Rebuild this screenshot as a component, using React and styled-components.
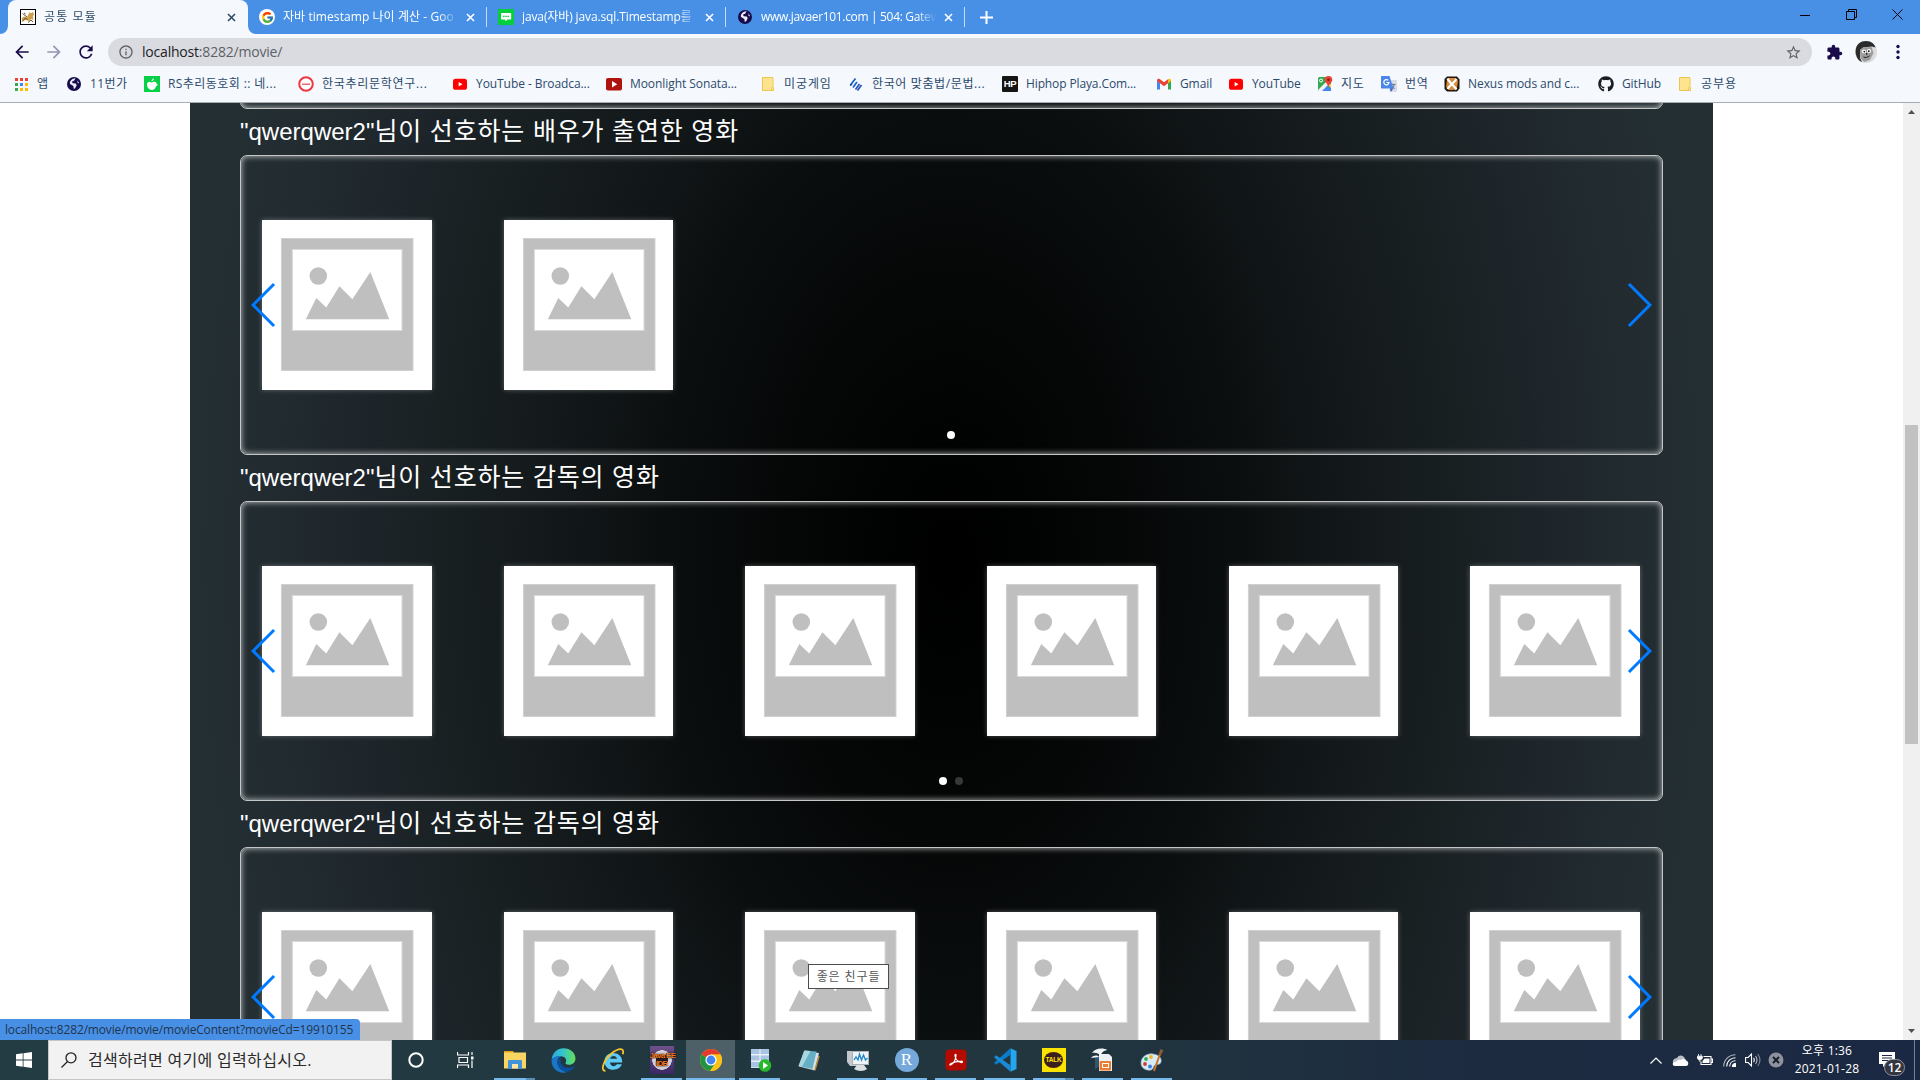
import React from "react";
import styled, { createGlobalStyle } from "styled-components";
import { FaGithub } from "react-icons/fa";
import { FcGoogle } from "react-icons/fc";
import {
  MdArrowBack,
  MdArrowForward,
  MdRefresh,
  MdInfoOutline,
  MdStarBorder,
  MdExtension,
} from "react-icons/md";

const ui = `"Open Sans", "Noto Sans CJK KR", sans-serif`;

const GlobalStyle = createGlobalStyle`
  * { box-sizing: border-box; }
  html, body { margin: 0; padding: 0; overflow: hidden; background: #fff; }
  svg { display: block; flex: none; }
`;

const Screen = styled.div`
  position: relative;
  width: 1920px;
  height: 1080px;
  display: flex;
  flex-direction: column;
  overflow: hidden;
  font-family: ${ui};
`;

/* ---------- browser frame ---------- */

const TabStrip = styled.div`
  height: 34px;
  flex: none;
  display: flex;
  align-items: stretch;
  background: #4790e6;
  padding-left: 8px;
`;

const Tab = styled.div`
  position: relative;
  width: ${(p) => (p.$active ? 240 : 239)}px;
  display: flex;
  align-items: center;
  padding: 0 12px 0 ${(p) => (p.$active ? 12 : 11)}px;
  color: ${(p) => (p.$active ? "#2f4a66" : "#fff")};
  background: ${(p) => (p.$active ? "#f5f8fd" : "transparent")};
  border-radius: 8px 8px 0 0;

  &::after {
    content: "";
    display: ${(p) => (p.$active ? "none" : "block")};
    position: absolute;
    right: 0;
    top: 7px;
    width: 1px;
    height: 20px;
    background: #c5dcf7;
  }
`;

const TabFoot = styled.svg`
  position: absolute;
  bottom: 0;
  ${(p) => (p.$left ? "left: -8px;" : "right: -8px; transform: scaleX(-1);")}
`;

const TabTitle = styled.span`
  width: 178px;
  margin-left: 8px;
  font-size: 12px;
  line-height: 18px;
  letter-spacing: ${(p) => p.$ls || 0}px;
  white-space: nowrap;
  -webkit-mask-image: linear-gradient(90deg, #000 156px, transparent 175px);
  mask-image: linear-gradient(90deg, #000 156px, transparent 175px);
`;

const TabClose = styled.span`
  margin-left: auto;
  display: flex;
`;

const GoogleDisc = styled.span`
  width: 16px;
  height: 16px;
  border-radius: 50%;
  background: #fff;
  display: flex;
  align-items: center;
  justify-content: center;
`;

const NewTab = styled.div`
  display: flex;
  align-items: center;
  padding-left: 15px;
`;

const WindowButtons = styled.div`
  margin-left: auto;
  display: flex;
  height: 29px;
`;

const WindowButton = styled.div`
  width: 46px;
  display: flex;
  align-items: center;
  justify-content: center;
`;

const Toolbar = styled.div`
  height: 36px;
  flex: none;
  display: flex;
  align-items: center;
  background: #f5f8fd;
  color: #1a0c4b;
  padding-left: 6px;
`;

const NavButton = styled.div`
  width: 32px;
  display: flex;
  justify-content: center;
  font-size: 20px;
  opacity: ${(p) => (p.$off ? 0.42 : 1)};
`;

const Omnibox = styled.div`
  width: 1704px;
  height: 28px;
  margin-left: 6px;
  border-radius: 14px;
  background: #dadbe0;
  display: flex;
  align-items: center;
  padding: 0 10px;
  color: #5f6368;
  font-size: 16px;
`;

const Address = styled.span`
  flex: 1;
  margin-left: 8px;
  font-size: 14px;
  line-height: 20px;
  letter-spacing: -0.2px;
  color: #5c6167;

  b { font-weight: 400; color: #202124; }
`;

const ToolAction = styled.div`
  width: ${(p) => p.$w}px;
  display: flex;
  justify-content: center;
  font-size: 19px;
`;

const BookmarkBar = styled.div`
  height: 33px;
  flex: none;
  display: flex;
  align-items: center;
  background: #f5f8fd;
  border-bottom: 1px solid #a9adb3;
  padding: 0 0 5px 13px;
`;

const Bookmark = styled.div`
  width: ${(p) => p.$w}px;
  flex: none;
  display: flex;
  align-items: center;
  gap: 8px;
  font-size: 12px;
  line-height: 18px;
  letter-spacing: ${(p) => p.$ls || 0}px;
  color: #2c4a6b;
  white-space: nowrap;
`;

const IconSlot = styled.span`
  width: 16px;
  height: 16px;
  flex: none;
  display: flex;
  align-items: center;
  justify-content: center;
`;

/* ---------- page ---------- */

const Viewport = styled.div`
  height: 937px;
  flex: none;
  display: flex;
  overflow: hidden;
`;

const PageBody = styled.main`
  flex: 1;
  display: flex;
  justify-content: center;
  overflow: hidden;
`;

const Container = styled.div`
  width: 1523px;
  height: 937px;
  overflow: hidden;
  padding: 0 50px;
  background: radial-gradient(
    ellipse 760px 1230px at 50% 455px,
    #000 0%,
    #010202 10%,
    #050707 22%,
    #0a0d0e 36%,
    #141a1c 55%,
    #192022 67%,
    #1c2327 74%,
    #1e252b 79%,
    #20292e 86%,
    #242f34 100%
  );
`;

const ScrolledContent = styled.div`
  margin-top: -294px;
`;

const SectionTitle = styled.h2`
  margin: 0;
  height: 46px;
  padding-top: 5px;
  color: #fff;
  font: 400 24px/34px "Liberation Sans", "Noto Sans CJK KR", sans-serif;
  white-space: nowrap;
`;

const Korean = styled.span`
  font-size: 25px;
  letter-spacing: 0.82px;
`;

const Carousel = styled.section`
  position: relative;
  height: 300px;
  display: flex;
  align-items: center;
  gap: 30px;
  border: 1px solid #c4c6c7;
  border-radius: 7px;
  box-shadow: inset 0 0 6px rgba(255, 255, 255, 0.75);
`;

const Slide = styled.div`
  width: 211.66px;
  flex: none;
  display: flex;
  justify-content: center;
`;

const Poster = styled.svg`
  width: 169.4px;
  height: 170px;
  background: #fff;
  box-shadow: 0 0 5px rgba(255, 255, 255, 0.3);
`;

const Arrow = styled.svg`
  position: absolute;
  top: 127px;
  ${(p) => (p.$next ? "right: 10px;" : "left: 10px;")}
`;

const Dots = styled.div`
  position: absolute;
  left: 0;
  right: 1px;
  bottom: 15px;
  display: flex;
  justify-content: center;
  gap: 8px;
`;

const Dot = styled.span`
  width: 8px;
  height: 8px;
  border-radius: 50%;
  background: ${(p) => (p.$on ? "#fff" : "#373839")};
`;

const Scrollbar = styled.div`
  width: 17px;
  display: flex;
  flex-direction: column;
  align-items: center;
  justify-content: space-between;
  background: #f0f0f0;
  padding: 7px 0;
`;

const ScrollTrack = styled.div`
  flex: 1;
  width: 13px;
  padding-top: 311px;
`;

const ScrollThumb = styled.div`
  height: 319px;
  background: #c1c1c1;
`;

const LinkStatus = styled.div`
  position: absolute;
  left: 0;
  top: 1019px;
  width: 360px;
  height: 21px;
  padding-left: 5px;
  border-radius: 0 4px 0 0;
  background: #4790e6;
  color: #22344c;
  font-size: 12px;
  line-height: 21px;
  letter-spacing: -0.16px;
  white-space: nowrap;
`;

const HoverTip = styled.div`
  position: absolute;
  left: 808px;
  top: 964px;
  width: 81px;
  height: 25px;
  border: 1px solid #4c4c4c;
  background: #fff;
  color: #575757;
  font-size: 12px;
  line-height: 24px;
  letter-spacing: 0.9px;
  text-align: center;
  white-space: nowrap;
`;

/* ---------- taskbar ---------- */

const Taskbar = styled.footer`
  height: 40px;
  flex: none;
  display: flex;
  background: linear-gradient(90deg, #233b43 0%, #21363f 55%, #1d2c40 75%, #1b2843 100%);
  color: #fff;
`;

const StartButton = styled.div`
  width: 48px;
  display: flex;
  align-items: center;
  justify-content: center;
`;

const SearchBox = styled.div`
  width: 344px;
  display: flex;
  align-items: center;
  gap: 11px;
  padding-left: 12px;
  background: #f2f2f2;
  border: 1px solid #c6c6c6;
  color: #2b2b2b;
  font-size: 16px;
  line-height: 22px;
  letter-spacing: 0.3px;
`;

const TaskButton = styled.div`
  position: relative;
  width: ${(p) => p.$w || 49}px;
  display: flex;
  align-items: center;
  justify-content: center;
  background: ${(p) => (p.$active ? "#4d6068" : "transparent")};

  &::after {
    content: "";
    display: ${(p) => (p.$running ? "block" : "none")};
    position: absolute;
    bottom: 0;
    left: ${(p) => (p.$active ? 0 : 4)}px;
    right: ${(p) => (p.$active ? 0 : 4)}px;
    height: 2px;
    background: ${(p) =>
      p.$many ? "linear-gradient(90deg, #76b9ed 32px, #5a8cb4 32px)" : "#76b9ed"};
  }
`;

const Tray = styled.div`
  margin-left: auto;
  display: flex;
  align-items: center;
`;

const TrayIcon = styled.div`
  width: ${(p) => p.$w || 24}px;
  display: flex;
  justify-content: center;
`;

const Clock = styled.div`
  width: 78px;
  font-size: 12px;
  line-height: 18px;
  text-align: center;
  padding-bottom: 1px;
  letter-spacing: 0.2px;
`;

const Notice = styled.div`
  position: relative;
  width: 48px;
  height: 40px;
  padding: 12px 0 0 12px;
  border-right: 1px solid #77808f;
  margin: 0 5px 0 1px;
`;

const NoticeBadge = styled.span`
  position: absolute;
  left: 17px;
  top: 19px;
  width: 21px;
  height: 17px;
  border-radius: 9px;
  border: 1px solid #8b8f98;
  background: #33363f;
  font-size: 12px;
  line-height: 15px;
  font-weight: 600;
  text-align: center;
`;

/* ---------- small drawings ---------- */

const CloseGlyph = ({ color }) => (
  <svg width="9" height="9" viewBox="0 0 9 9">
    <path d="M1 1l7 7M8 1l-7 7" stroke={color} strokeWidth="1.6" />
  </svg>
);

const Tomcat = () => (
  <svg width="16" height="16" viewBox="0 0 16 16">
    <rect x=".5" y=".5" width="15" height="15" fill="#fff" stroke="#000" />
    <path d="M2 9l2-1.500 3 1L9.500 3l1.300 1.200L13 3l1 2.500-1.200 2 .7 3.500-2.500-1-2 2-3-1L2 12z" fill="#cf9f4a" />
    <path d="M2.500 4.500L7 8M2.500 12.500l3-3.500 2 1.500M8 13.500l3-2.500 2 2M4 4l1.500 1" stroke="#6a5233" fill="none" />
  </svg>
);

const Globe = () => (
  <svg width="16" height="16" viewBox="0 0 16 16">
    <circle cx="8" cy="8" r="7" fill="#170b4c" />
    <path d="M6.500 3l3-1-1.200 2.600-2.400 1.200.9 1.500 3 .2.900 1.700-1.700 3.300-1.300.3-.3-2.700-3.400-2C3.300 6 4.700 4 6.500 3zM11.500 4.200l1.700 3.200-1.700-.6z" fill="#e9eefa" />
  </svg>
);

const Blog = () => (
  <svg width="16" height="16" viewBox="0 0 16 16">
    <rect width="16" height="16" fill="#03cf3d" />
    <path d="M4 4h8.200c.8 0 1 .4 1 1v4.500c0 .7-.3 1-1 1H9.300L8 12.300l-1.300-1.800H4c-.7 0-1-.3-1-1V5c0-.6.3-1 1-1z" fill="#fff" />
    <path d="M5 7.300h6" stroke="#03cf3d" strokeWidth="1.300" strokeDasharray="1.500 .7" />
  </svg>
);

const Apps = () => (
  <svg width="16" height="16" viewBox="0 0 16 16">
    {["#ea4335", "#ea4335", "#ea4335", "#34a853", "#4285f4", "#fbbc04", "#34a853", "#fbbc04", "#fbbc04"].map((c, i) => (
      <rect key={i} x={2 + (i % 3) * 5} y={2 + Math.floor(i / 3) * 5} width="3" height="3" fill={c} />
    ))}
  </svg>
);

const GreenApple = () => (
  <svg width="16" height="16" viewBox="0 0 16 16">
    <rect width="16" height="16" fill="#07cf46" />
    <path d="M3 7.500C4 5.700 6 5.600 7.700 6.400 9.500 5.500 12 5.700 12.500 7.400c1.600.3 1.500 2.400-.5 2.800C11.300 12.700 10 14 7.800 14 4.800 14 2.600 10.500 3 7.500zM7.500 5.200c0-1.500.8-2.500 2.500-3-.1 1.700-1 2.700-2.500 3z" fill="#fff" />
  </svg>
);

const CafeRing = () => (
  <svg width="16" height="16" viewBox="0 0 16 16">
    <circle cx="8" cy="8" r="6.800" fill="#fff" stroke="#ee3541" strokeWidth="2" />
    <path d="M4.300 8.300h7.500" stroke="#ee3541" strokeWidth="1.600" strokeDasharray="1.500 .5" />
  </svg>
);

const YouTube = () => (
  <svg width="16" height="16" viewBox="0 0 16 16">
    <rect x="1" y="2.800" width="14" height="11" rx="2.600" fill="#f00" />
    <path d="M6.600 6v4.600l4-2.300z" fill="#fff" />
  </svg>
);

const RedPlay = () => (
  <svg width="16" height="16" viewBox="0 0 16 16">
    <rect y="2" width="16" height="12.500" rx="2" fill="#b0120d" />
    <path d="M6 5v6.400l5.200-3.200z" fill="#fff" />
  </svg>
);

const Folder = () => (
  <svg width="16" height="16" viewBox="0 0 16 16">
    <path d="M2.500 1.500h10.500v9l.6 1v3H2.500z" fill="#ffe48f" stroke="#eec64f" />
    <path d="M11.500 14v-3" stroke="#eec64f" />
  </svg>
);

const Swoosh = () => (
  <svg width="16" height="16" viewBox="0 0 16 16">
    <path d="M2.500 9L7.500 2.500M5 11.500L9 6" stroke="#1560c4" strokeWidth="1.700" fill="none" />
    <path d="M2 9.500l2-1.500" stroke="#12408f" strokeWidth="1.500" />
    <path d="M7.500 13.500L11.500 8M9.500 14.500l4-5.500" stroke="#2a56b8" strokeWidth="1.700" fill="none" />
  </svg>
);

const BadgeText = styled.span`
  width: 16px;
  height: 16px;
  border-radius: 1px;
  background: #151515;
  color: #fff;
  font: 700 9.5px/16px "Liberation Sans", sans-serif;
  letter-spacing: -0.3px;
  text-align: center;
`;

const Gmail = () => (
  <svg width="16" height="16" viewBox="0 0 16 16">
    <path d="M1 4.500v9h3V7z" fill="#4285f4" />
    <path d="M15 4.500v9h-3V7z" fill="#34a853" />
    <path d="M1 4.600C1 3 2.700 2.300 4 3.200L8 6.300l4-3.100v4L8 10.200 4 7.200 1 5z" fill="#ea4335" />
    <path d="M12 3.200c1.300-.9 3-.2 3 1.400V5l-3 2.200z" fill="#fbbc04" />
  </svg>
);

const Maps = () => (
  <svg width="16" height="16" viewBox="0 0 16 16">
    <rect x="1" y="1" width="13" height="14" rx="1.500" fill="#34a853" />
    <path d="M2 15l7-7 5 5v2z" fill="#4285f4" />
    <path d="M1 14l8.500-8.500L11 9l-6 6H2z" fill="#f1f3f6" />
    <path d="M10.500 8.500l3.500 3.500V8z" fill="#fdd663" />
    <path d="M11.500 0a3.800 3.800 0 013.800 3.800c0 2.700-2.800 3.600-3.800 7.200-1-3.600-3.800-4.500-3.800-7.200A3.800 3.800 0 0111.500 0z" fill="#ea4335" />
    <circle cx="11.500" cy="3.800" r="1.300" fill="#7f1d15" />
    <circle cx="4" cy="4.500" r="1.500" fill="none" stroke="#fff" />
  </svg>
);

const TranslateIcon = () => (
  <svg width="16" height="16" viewBox="0 0 16 16">
    <path d="M6 4h9c.6 0 1 .4 1 1v10c0 .6-.4 1-1 1H9z" fill="#d9dce2" />
    <path d="M9.500 8.500h5M12 7.500v1M13.500 8.500c-.5 2-2 3.500-3.500 4M10.800 9.500c.7 1.500 2 2.500 3 3" stroke="#6b7a90" fill="none" />
    <path d="M1 0h7.500l4 12.500H1c-.6 0-1-.4-1-1V1c0-.6.400-1 1-1z" fill="#4a86e8" />
    <path d="M9 12.500h3.500L9.800 16z" fill="#2f5fc4" />
    <path d="M7.200 4.300A2.600 2.600 0 108 6.500H5.500" stroke="#fff" strokeWidth="1.200" fill="none" />
  </svg>
);

const Nexus = () => (
  <svg width="16" height="16" viewBox="0 0 16 16">
    <path d="M3 .5h10l2.500 3v9L13 15.500H3L.5 13V3z" fill="#201711" />
    <path d="M4 2h8l2 3-1 7-3 2H5l-3-3 1-7z" fill="#d98d3c" />
    <path d="M3.500 2.500C5 6 10 10 12.500 13.500M12.500 3C10 7 6 9 3.500 13" stroke="#fff" strokeWidth="2.200" fill="none" />
  </svg>
);

const Avatar = () => (
  <svg width="22" height="22" viewBox="0 0 22 22">
    <circle cx="11" cy="11" r="11" fill="#dcdcdc" />
    <path d="M.8 13C-.5 4 5 0 11 0c5.500 0 8.500 3 9.500 6.500L17 5.500 8 6.500 5 9v8l2 4C4 20 1.500 17 .8 13z" fill="#2b2b2b" />
    <path d="M5 9l3-2.500L16.500 6l2 6-3.500 7-6 2-3.500-4z" fill="#9c9c9c" />
    <circle cx="9" cy="10.500" r="2.100" fill="#fff" />
    <circle cx="14" cy="10" r="2.100" fill="#fff" />
    <circle cx="9.300" cy="10.600" r=".9" fill="#111" />
    <circle cx="13.800" cy="10.200" r=".9" fill="#111" />
    <path d="M8.500 16c2 .9 4.500.4 6-1.300M11.500 12l.4 2" stroke="#222" fill="none" />
  </svg>
);

const PosterArt = () => (
  <Poster viewBox="0 0 170 170" preserveAspectRatio="none">
    <rect x="19.500" y="18.500" width="132" height="132" fill="#bfbfbf" stroke="#d0d0d0" />
    <rect x="30.500" y="29.500" width="110" height="81" fill="#fff" stroke="#d9d9d9" />
    <circle cx="56.500" cy="56" r="8.800" fill="#bfbfbf" />
    <path d="M44 99.200L54.500 78l10 9.500L77.700 66.200l13 13L108.700 52l19 47.200z" fill="#bfbfbf" />
  </Poster>
);

/* taskbar drawings, 24px grid */
const T = ({ children, s = 24 }) => (
  <svg width={s} height={s} viewBox="0 0 24 24">{children}</svg>
);

const Explorer = () => (
  <T>
    <path d="M1 3h9l1.500 2.500H1z" fill="#e8a317" />
    <rect x="1" y="4.500" width="22" height="16" fill="#fbd561" />
    <path d="M5 21v-7.500c0-1 .6-1.500 1.500-1.500h11c1 0 1.500.5 1.500 1.500V21h-4v-5h-6v5z" fill="#3f93d6" />
    <rect x="9" y="16" width="6" height="4.500" fill="#fbe7a3" />
  </T>
);

const EdgeLogo = () => (
  <T s={25}>
    <defs>
      <linearGradient id="edgeTop" x1="0" x2="1">
        <stop offset="0" stopColor="#2aa9e0" />
        <stop offset=".5" stopColor="#35c6c9" />
        <stop offset="1" stopColor="#66e052" />
      </linearGradient>
    </defs>
    <path d="M.6 10.500C1.500 4.500 6.200.2 12 .2c6.500 0 11.500 4.600 11.500 9.800 0 3.500-2.600 6-6.200 6-2.800 0-4-1-3.200-2.200 1.500-2.400-.3-6-4.600-6-4 0-7.500 1.700-8.900 2.700z" fill="url(#edgeTop)" />
    <path d="M.5 11.500C2 8.500 5.600 7.500 9.500 7.800c-3.800 1.600-4.700 7-1.500 10.700 2 2.400 4.500 4 7.500 4.600C8 25.700.2 20 .5 11.500z" fill="#1877c9" />
    <path d="M9.600 9.200c-1.800 4 .6 9.800 6.800 9.800 2 0 3.800-.6 5.400-1.600.5-.3 1 .2.600.7-1.500 2.200-4 4.200-6.900 5-5.500-.5-9.800-5-9-9.500.3-2 1.500-3.600 3.100-4.400z" fill="#0c4f9c" />
  </T>
);

const IELogo = () => (
  <T>
    <path d="M19.300 14.500H9c.2 4.200 5.600 4.700 6.800 1.800h5C18.700 23.800 3.500 24.300 3.500 13.200 3.500 2 21.800 2 21.200 14.500zM9.200 10.800h6.800c-.3-3.800-6.300-3.900-6.800 0z" fill="#5dcbf5" />
    <path d="M4.500 22.800C-1.500 23 3.500 11 10.500 5.500c7-5.800 13.500-6 11.300.7" fill="none" stroke="#f5c52d" strokeWidth="1.800" />
  </T>
);

const EclipseBox = styled.div`
  width: 24px;
  height: 28px;
  padding-top: 6px;
  margin-bottom: 1px;
  background: radial-gradient(circle at 50% 50%, #2f1e28 0 6px, #d7d2d8 6px 9.500px, transparent 10px),
    linear-gradient(#70508a, #3a2763);
  color: #f47b20;
  font: 700 8px/8px "Liberation Sans", sans-serif;
  letter-spacing: -0.7px;
  text-align: center;
  white-space: nowrap;
  text-shadow: 0 0 1px #000, 0 0 2px #000;
`;

const ChromeLogo = () => (
  <T>
    <circle cx="12" cy="12" r="11" fill="#fbc116" />
    <path d="M12 12L2.500 6.500A11 11 0 0112 1a11 11 0 019.500 5.500H12z" fill="#e33b2e" />
    <path d="M12 12L2.500 6.500a11 11 0 008.500 16.400l5.800-8.100z" fill="#229342" />
    <path d="M12 6.500h9.500A11 11 0 0111 22.950L16.800 14.700z" fill="#fbc116" />
    <circle cx="12" cy="12" r="5.600" fill="#fff" />
    <circle cx="12" cy="12" r="4.400" fill="#4285f4" />
  </T>
);

const ServerIcon = () => (
  <T>
    <path d="M3 1h18v19H3z" fill="#d3dfee" />
    <path d="M3 1h18v5H3zM3 7.500h18v5H3zM3 14h18v5H3z" fill="#a9c3e2" />
    <path d="M3 6.700h18M3 13.200h18M12 1v19" stroke="#f2f6fb" />
    <circle cx="17" cy="17.500" r="6.300" fill="#25b82b" />
    <path d="M15 14v7l5-3.500z" fill="#fff" />
  </T>
);

const NotepadIcon = () => (
  <T>
    <path d="M7 3l15 2-4 17.500L2 18.500z" fill="#d9e1e4" />
    <path d="M7.500 2.500l12 1L15.500 21 1.500 18z" fill="#66b0c6" />
    <path d="M7.500 2.500l6 .6L5 18.700 1.500 18z" fill="#a8d5df" />
    <path d="M18 22l4-14" stroke="#b68b45" strokeWidth="1.500" />
  </T>
);

const MonitorIcon = () => (
  <T>
    <path d="M1 3h15l2 3v12H4l-3-4z" fill="#c3c7cb" />
    <rect x="6.500" y="3.500" width="16" height="13" fill="#eef3f7" stroke="#aab1b8" />
    <path d="M8 12l2-3 2 3 1.500-6 2 6 2-5 2 5 2-2" fill="none" stroke="#1f87c7" strokeWidth="1.300" />
    <path d="M11 17h7l3 4c-3 2.500-9 2.500-13 0z" fill="#dcdfe2" />
  </T>
);

const RoundLetter = styled.span`
  width: 24px;
  height: 24px;
  border-radius: 50%;
  background: #75a9da;
  color: #fff;
  font: 400 17px/24px "Liberation Serif", serif;
  text-align: center;
`;

const Acrobat = () => (
  <T>
    <rect x="1.500" y="1.500" width="21" height="21" rx="4" fill="#b30b00" />
    <path d="M6.500 17c2.500-1 5-5 5.500-9.500.1-1.500-1-1.500-1 0 .3 3.500 3 6.500 6.500 7 1.500 0 1-1.500-.5-1.400-3.500.1-7.500 1-10 2.400-1.300.8-1.500 1.800-.5 1.500z" fill="none" stroke="#fff" strokeWidth="1.300" />
  </T>
);

const VSCode = () => (
  <T>
    <path d="M17.500 .3L23.500 3v18l-6 2.700z" fill="#25a5ef" />
    <path d="M17.500 .3L1 14.800l2.200 2L17.500 6.700z" fill="#0a7cc8" />
    <path d="M17.500 23.700L1 9.200l2.200-2L17.500 17.300z" fill="#1a8ad4" />
  </T>
);

const TalkBox = styled.span`
  width: 24px;
  height: 24px;
  display: flex;
  align-items: center;
  justify-content: center;
  background: #fbe300;
`;

const TalkBubble = styled.span`
  width: 19px;
  height: 16px;
  border-radius: 50%;
  background: #3b1e1e;
  color: #fbe300;
  font: 700 6.5px/16px "Liberation Sans", sans-serif;
  letter-spacing: -0.2px;
  text-align: center;
`;

const Impress = () => (
  <T>
    <path d="M8 6h10l3 3v14H8z" fill="#eef1f4" />
    <path d="M4 9v12l4-2V8z" fill="#31566e" />
    <path d="M1 5C5-.5 12 0 17 2c-4 .3-6 2-8 6-1-3-4-3.500-8-3zM0 10c3-3 6-3 8-1" fill="#f3f6f8" />
    <path d="M15 0l6 2.500-3 4z" fill="#20323c" />
    <rect x="8.500" y="13" width="11.500" height="9.500" rx="1" fill="#ed7d31" />
    <rect x="11.500" y="15.500" width="6" height="4" fill="none" stroke="#fff" />
  </T>
);

const Paint = () => (
  <T>
    <path d="M1 15C1 9 7 5 13 6c6 .8 9 4 8 8-.6 3-4 2-6 3s-1 4-4 5C6 23 1 20 1 15z" fill="#d7ebf7" stroke="#8fb4ca" strokeWidth=".7" />
    <circle cx="6" cy="11" r="1.900" fill="#35a853" />
    <circle cx="11" cy="9" r="1.900" fill="#f2b41f" />
    <circle cx="5" cy="16" r="1.900" fill="#d93b30" />
    <circle cx="10" cy="18.500" r="1.900" fill="#3a7de0" />
    <path d="M14 23L20 6" stroke="#c7752a" strokeWidth="2" />
    <path d="M18.500 6.500l2-5.500 3 1.500-2.800 5z" fill="#8e5a31" />
  </T>
);

/* ---------- data ---------- */

const tabs = [
  { icon: <Tomcat />, title: "공통 모듈", active: true, ls: 1.1 },
  { icon: <GoogleDisc><FcGoogle size={13} /></GoogleDisc>, title: "자바 timestamp 나이 계산 - Goo", ls: 0.07 },
  { icon: <Blog />, title: "java(자바) java.sql.Timestamp를", ls: -0.12 },
  { icon: <Globe />, title: "www.javaer101.com | 504: Gatew", ls: -0.33 },
];

const bookmarks = [
  { icon: <Apps />, text: "앱", w: 53 },
  { icon: <Globe />, text: "11번가", w: 78, ls: 0.4 },
  { icon: <GreenApple />, text: "RS추리동호회 :: 네...", w: 154, ls: 0.42 },
  { icon: <CafeRing />, text: "한국추리문학연구...", w: 154, ls: 0.7 },
  { icon: <YouTube />, text: "YouTube - Broadca...", w: 154, ls: -0.07 },
  { icon: <RedPlay />, text: "Moonlight Sonata...", w: 154, ls: -0.07 },
  { icon: <Folder />, text: "미궁게임", w: 88, ls: 0.9 },
  { icon: <Swoosh />, text: "한국어 맞춤법/문법...", w: 154, ls: 0.62 },
  { icon: <BadgeText>HP</BadgeText>, text: "Hiphop Playa.Com...", w: 154, ls: -0.12 },
  { icon: <Gmail />, text: "Gmail", w: 72, ls: -0.1 },
  { icon: <YouTube />, text: "YouTube", w: 89, ls: -0.1 },
  { icon: <Maps />, text: "지도", w: 64, ls: 0.8 },
  { icon: <TranslateIcon />, text: "번역", w: 63, ls: 0.8 },
  { icon: <Nexus />, text: "Nexus mods and c...", w: 154, ls: -0.06 },
  { icon: <FaGithub size={16} color="#1b1f23" />, text: "GitHub", w: 79, ls: -0.1 },
  { icon: <Folder />, text: "공부용", w: 80, ls: 0.9 },
];

const sections = [
  { title: "님이 선호하는 배우가 출연한 영화", count: 2, pages: 1 },
  { title: "님이 선호하는 감독의 영화", count: 6, pages: 2 },
  { title: "님이 선호하는 감독의 영화", count: 6, pages: 2 },
];

const apps = [
  { icon: <Explorer />, running: true, many: true },
  { icon: <EdgeLogo /> },
  { icon: <IELogo /> },
  { icon: <EclipseBox>Java EE<br />IDE</EclipseBox>, running: true },
  { icon: <ChromeLogo />, running: true, active: true },
  { icon: <ServerIcon />, running: true },
  { icon: <NotepadIcon /> },
  { icon: <MonitorIcon />, running: true },
  { icon: <RoundLetter>R</RoundLetter>, running: true },
  { icon: <Acrobat />, running: true },
  { icon: <VSCode />, running: true },
  { icon: <TalkBox><TalkBubble>TALK</TalkBubble></TalkBox>, running: true, many: true },
  { icon: <Impress />, running: true },
  { icon: <Paint />, running: true },
];

const MovieCarousel = ({ count, pages }) => (
  <Carousel>
    {Array.from({ length: count }, (_, i) => (
      <Slide key={i}>
        <PosterArt />
      </Slide>
    ))}
    <Arrow width="27" height="44" viewBox="0 0 27 44">
      <path d="M0 22L22 0l2.100 2.100L4.200 22l19.900 19.900L22 44z" fill="#007aff" />
    </Arrow>
    <Arrow $next width="27" height="44" viewBox="0 0 27 44">
      <path d="M27 22L5 44l-2.100-2.100L22.800 22 2.900 2.100 5 0z" fill="#007aff" />
    </Arrow>
    <Dots>
      {Array.from({ length: pages }, (_, i) => (
        <Dot key={i} $on={i === 0} />
      ))}
    </Dots>
  </Carousel>
);

export default function App() {
  return (
    <Screen>
      <GlobalStyle />
      <TabStrip>
        {tabs.map((t) => (
          <Tab key={t.title} $active={t.active}>
            {t.active && (
              <>
                <TabFoot $left width="8" height="8"><path d="M8 0v8H0a8 8 0 008-8z" fill="#f5f8fd" /></TabFoot>
                <TabFoot width="8" height="8"><path d="M8 0v8H0a8 8 0 008-8z" fill="#f5f8fd" /></TabFoot>
              </>
            )}
            <IconSlot>{t.icon}</IconSlot>
            <TabTitle $ls={t.ls}>{t.title}</TabTitle>
            <TabClose><CloseGlyph color={t.active ? "#2f4a66" : "#fff"} /></TabClose>
          </Tab>
        ))}
        <NewTab>
          <svg width="13" height="13" viewBox="0 0 13 13"><path d="M6.500 0v13M0 6.500h13" stroke="#fff" strokeWidth="2" /></svg>
        </NewTab>
        <WindowButtons>
          <WindowButton><svg width="10" height="10"><path d="M0 5.500h10" stroke="#000" /></svg></WindowButton>
          <WindowButton>
            <svg width="11" height="11"><path d="M.5 2.500h8v8h-8zM2.500 2.500v-2h8v8h-2" fill="none" stroke="#000" /></svg>
          </WindowButton>
          <WindowButton><svg width="11" height="11"><path d="M.5.5l10 10M10.500.5l-10 10" stroke="#000" /></svg></WindowButton>
        </WindowButtons>
      </TabStrip>

      <Toolbar>
        <NavButton><MdArrowBack /></NavButton>
        <NavButton $off><MdArrowForward /></NavButton>
        <NavButton><MdRefresh /></NavButton>
        <Omnibox>
          <MdInfoOutline />
          <Address><b>localhost</b>:8282/movie/</Address>
          <MdStarBorder size={17} />
        </Omnibox>
        <ToolAction $w={44}><MdExtension size={17} /></ToolAction>
        <ToolAction $w={20}><Avatar /></ToolAction>
        <ToolAction $w={44}>
          <svg width="4" height="16" viewBox="0 0 4 16">
            <circle cx="2" cy="2.500" r="1.700" fill="#1a0c4b" />
            <circle cx="2" cy="8" r="1.700" fill="#1a0c4b" />
            <circle cx="2" cy="13.500" r="1.700" fill="#1a0c4b" />
          </svg>
        </ToolAction>
      </Toolbar>

      <BookmarkBar>
        {bookmarks.map((b, i) => (
          <Bookmark key={i} $w={b.w} $ls={b.ls}>
            <IconSlot>{b.icon}</IconSlot>
            {b.text}
          </Bookmark>
        ))}
      </BookmarkBar>

      <Viewport>
        <PageBody>
          <Container>
            <ScrolledContent>
              <MovieCarousel count={0} pages={0} />
              {sections.map((s, i) => (
                <React.Fragment key={i}>
                  <SectionTitle>"qwerqwer2"<Korean>{s.title}</Korean></SectionTitle>
                  <MovieCarousel count={s.count} pages={s.pages} />
                </React.Fragment>
              ))}
            </ScrolledContent>
          </Container>
        </PageBody>
        <Scrollbar>
          <svg width="7" height="4"><path d="M0 4L3.500 0 7 4z" fill="#505050" /></svg>
          <ScrollTrack><ScrollThumb /></ScrollTrack>
          <svg width="7" height="4"><path d="M0 0l3.500 4L7 0z" fill="#505050" /></svg>
        </Scrollbar>
      </Viewport>

      <Taskbar>
        <StartButton>
          <svg width="16" height="16" viewBox="0 0 16 16">
            <path d="M0 2.300l6.700-1v6.300H0zM7.500 1.200L16 0v7.600H7.500zM0 8.400h6.700v6.300L0 13.700zM7.500 8.400H16V16l-8.500-1.200z" fill="#fff" />
          </svg>
        </StartButton>
        <SearchBox>
          <svg width="16" height="16" viewBox="0 0 16 16">
            <circle cx="10" cy="5.800" r="5" fill="none" stroke="#222" strokeWidth="1.300" />
            <path d="M6.500 9.500L.5 15.500" stroke="#222" strokeWidth="1.300" />
          </svg>
          검색하려면 여기에 입력하십시오.
        </SearchBox>
        <TaskButton $w={48}>
          <svg width="16" height="16"><circle cx="8" cy="8" r="6.700" fill="none" stroke="#fff" strokeWidth="2" /></svg>
        </TaskButton>
        <TaskButton $w={50}>
          <svg width="17" height="16" viewBox="0 0 17 16">
            <path d="M.5 0v3h11V0M2 5.500h8.500v5H2zM.5 16v-3h11v3M15 0v3M15 8.500V16" fill="none" stroke="#fff" strokeWidth="1.200" />
            <rect x="14" y="4.500" width="2.500" height="3" fill="#fff" />
          </svg>
        </TaskButton>
        {apps.map((a, i) => (
          <TaskButton key={i} $running={a.running} $active={a.active} $many={a.many}>
            {a.icon}
          </TaskButton>
        ))}
        <Tray>
          <TrayIcon>
            <svg width="12" height="7"><path d="M.5 6.500L6 1l5.500 5.500" fill="none" stroke="#fff" strokeWidth="1.200" /></svg>
          </TrayIcon>
          <TrayIcon>
            <svg width="17" height="11" viewBox="0 0 17 11">
              <path d="M1 8C0 4 4 3 5 3c2-4 7-3 8 1l3 3-3 3H3z" fill="#b9bec8" />
              <path d="M3 11C0 11 0 7 3 7c3-1 3-3 6-2 2-2 5-1 5 1 3 0 3 5 0 5z" fill="#fff" />
            </svg>
          </TrayIcon>
          <TrayIcon $w={25}>
            <svg width="16" height="12" viewBox="0 0 16 12">
              <path d="M6.500 2.500h7.500v8H4v-3M14.500 5h1v3.500h-1" fill="none" stroke="#fff" strokeWidth="1.100" />
              <path d="M7.500 4.500h5v4.500H5.500V7z" fill="#fff" />
              <path d="M1.500 0v2M4 0v2M.3 2.200h5v2L4 5.800H1.500L.3 4.200zM2.800 5.500V8" fill="#fff" stroke="#fff" strokeWidth=".8" />
            </svg>
          </TrayIcon>
          <TrayIcon $w={25}>
            <svg width="13" height="13" viewBox="0 0 13 13" fill="none" stroke="#fff" strokeWidth="1.100">
              <path d="M.7 12.500C.7 6 6 .7 12.500.7" opacity=".65" />
              <path d="M3.700 12.500c0-5 4-8.800 8.800-8.800M6.700 12.500c0-3.500 2.500-5.800 5.800-5.800" />
              <path d="M9.500 12.500c0-1.700 1.300-3 3-3v3z" fill="#fff" />
            </svg>
          </TrayIcon>
          <TrayIcon $w={21}>
            <svg width="16" height="14" viewBox="0 0 16 14" fill="none" stroke="#fff" strokeWidth="1.100">
              <path d="M.6 4.500h2.500L6.500 1v12L3.100 9.500H.6z" />
              <path d="M8.500 5c1 1 1 3 0 4" />
              <path d="M10.500 3c2 2.200 2 5.800 0 8" opacity=".7" />
              <path d="M12.700 1c3 3.500 3 8.500 0 12" opacity=".45" />
            </svg>
          </TrayIcon>
          <TrayIcon $w={25}>
            <svg width="16" height="16" viewBox="0 0 16 16">
              <circle cx="8" cy="8" r="7.500" fill="#8d929c" />
              <path d="M5 5l6 6M11 5l-6 6" stroke="#151b28" strokeWidth="1.800" />
            </svg>
          </TrayIcon>
          <Clock>오후 1:36<br />2021-01-28</Clock>
          <Notice>
            <svg width="16" height="15" viewBox="0 0 16 15">
              <path d="M0 0h16v12H7l-3 3v-3H0z" fill="#fff" />
              <path d="M3 3.500h10M3 6h10M3 8.500h6" stroke="#1b2843" />
            </svg>
            <NoticeBadge>12</NoticeBadge>
          </Notice>
        </Tray>
      </Taskbar>

      <LinkStatus>localhost:8282/movie/movie/movieContent?movieCd=19910155</LinkStatus>
      <HoverTip>좋은 친구들</HoverTip>
    </Screen>
  );
}
